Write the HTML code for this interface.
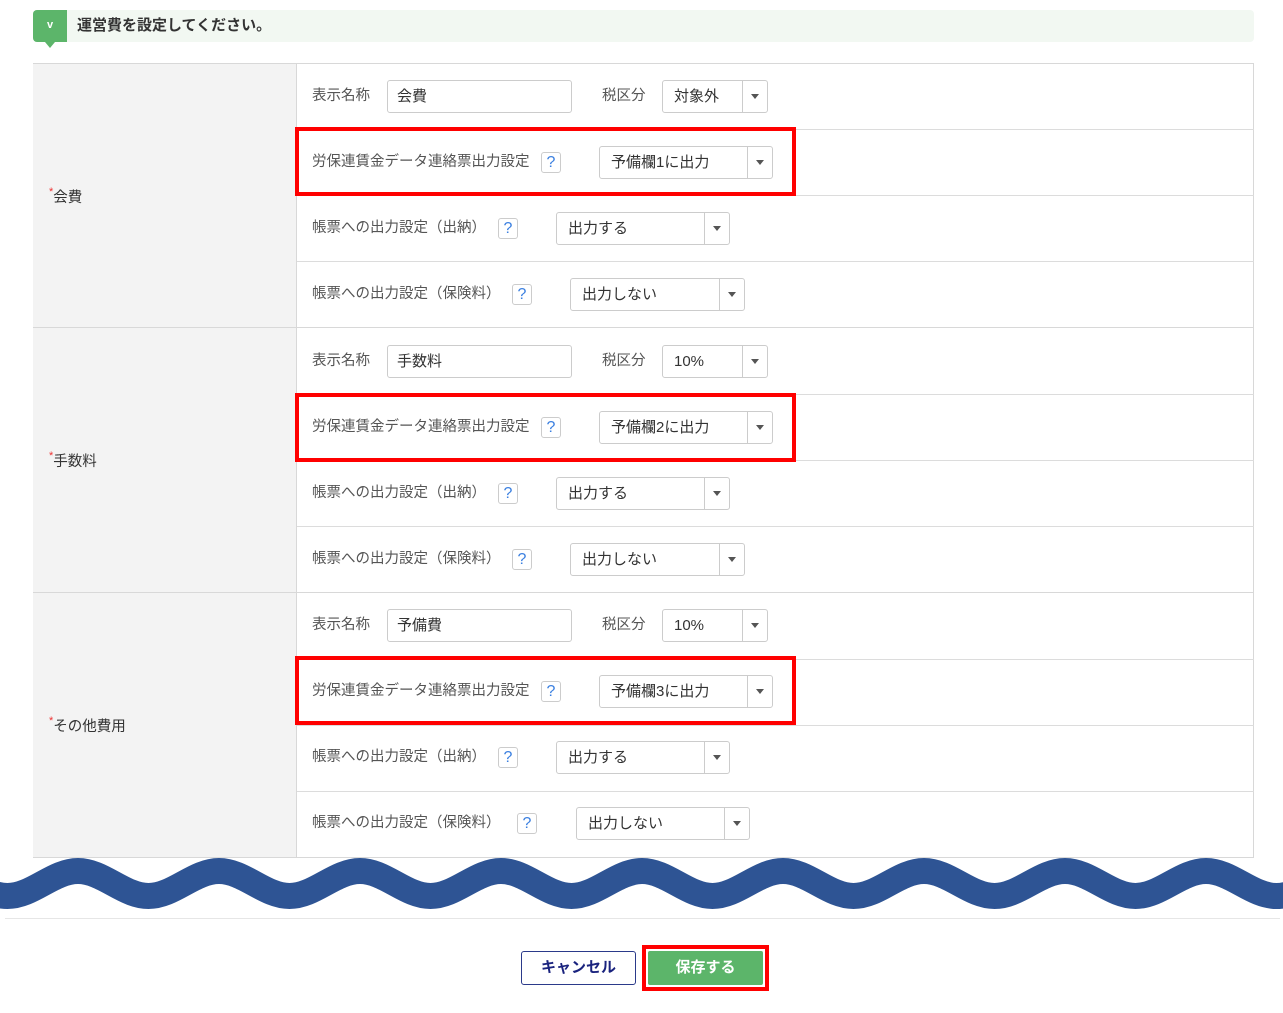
<!DOCTYPE html>
<html><head><meta charset="utf-8"><style>
*{box-sizing:border-box;margin:0;padding:0}
body{width:1283px;height:1013px;background:#fff;position:relative;overflow:hidden;font-family:"Liberation Sans","Noto Sans CJK JP",sans-serif;font-size:14px;color:#555}
.a{position:absolute}
.g{position:absolute;left:33px;width:1221px;height:265px;border-bottom:1px solid #d8d8d8}
.lab{position:absolute;left:0;top:0;width:264px;height:264px;background:#f3f3f3;border-right:1px solid #d8d8d8}
.lab span{position:absolute;left:16px;top:122px;color:#333;font-size:14.5px}
.lab span b{color:#e33;font-weight:normal;font-size:11px;vertical-align:top}
.ln{position:absolute;left:264px;right:0;height:1px;background:#dcdcdc}
.t{position:absolute;line-height:20px;color:#555;font-size:14.5px}
.in{position:absolute;height:33px;border:1px solid #ccc;border-radius:3px;background:#fff;color:#333;font-size:15px;line-height:31px;padding-left:9px}
.sel{position:absolute;height:33px;border:1px solid #ccc;border-radius:3px;background:#fff;color:#333;font-size:15px;line-height:31px;padding-left:11px}
.sel i{position:absolute;right:0;top:0;width:25px;height:31px;border-left:1px solid #ccc}
.sel i:after{content:"";position:absolute;left:8px;top:13px;border-left:4px solid transparent;border-right:4px solid transparent;border-top:5px solid #555}
.q{position:absolute;width:20px;height:21px;border:1px solid #ccc;border-radius:3px;color:#3a7fe0;font-size:16px;line-height:19px;text-align:center;background:#fff}
.red{position:absolute;left:262px;width:501px;height:69px;border:4px solid #f00}
</style></head><body>
<div class="a" style="left:33px;top:10px;width:1221px;height:32px;background:#f2f8f2;border-radius:4px"></div>
<div class="a" style="left:33px;top:10px;width:34px;height:32px;background:#5cb56a;border-radius:4px 0 0 4px;color:#fff;text-align:center;font-size:11px;line-height:30px;font-weight:bold">v</div>
<div class="a" style="left:45px;top:42px;border-left:5px solid transparent;border-right:5px solid transparent;border-top:6px solid #5cb56a"></div>
<div class="a" style="left:77px;top:15px;font-size:15px;font-weight:bold;color:#333;line-height:22px">運営費を設定してください。</div>
<div class="a" style="left:33px;top:63px;width:1221px;height:795px;border:1px solid #d8d8d8"></div>

<div class="g" style="top:63px">
<div class="lab" style="top:1px;height:263px"><span><b>*</b>会費</span></div>
<div class="ln" style="top:66px"></div><div class="ln" style="top:132px"></div><div class="ln" style="top:198px"></div>
<div class="t" style="left:279px;top:23px">表示名称</div>
<div class="in" style="left:354px;top:17px;width:185px">会費</div>
<div class="t" style="left:569px;top:23px">税区分</div>
<div class="sel" style="left:629px;top:17px;width:106px">対象外<i></i></div>
<div class="t" style="left:279px;top:89px">労保連賃金データ連絡票出力設定</div>
<div class="q" style="left:508px;top:89px">?</div>
<div class="sel" style="left:566px;top:83px;width:174px">予備欄1に出力<i></i></div>
<div class="red" style="top:64px"></div>
<div class="t" style="left:279px;top:155px">帳票への出力設定（出納）</div>
<div class="q" style="left:465px;top:155px">?</div>
<div class="sel" style="left:523px;top:149px;width:174px">出力する<i></i></div>
<div class="t" style="left:279px;top:221px">帳票への出力設定（保険料）</div>
<div class="q" style="left:479px;top:221px">?</div>
<div class="sel" style="left:537px;top:215px;width:175px">出力しない<i></i></div>
</div>

<div class="g" style="top:328px">
<div class="lab"><span><b>*</b>手数料</span></div>
<div class="ln" style="top:66px"></div><div class="ln" style="top:132px"></div><div class="ln" style="top:198px"></div>
<div class="t" style="left:279px;top:23px">表示名称</div>
<div class="in" style="left:354px;top:17px;width:185px">手数料</div>
<div class="t" style="left:569px;top:23px">税区分</div>
<div class="sel" style="left:629px;top:17px;width:106px">10%<i></i></div>
<div class="t" style="left:279px;top:89px">労保連賃金データ連絡票出力設定</div>
<div class="q" style="left:508px;top:89px">?</div>
<div class="sel" style="left:566px;top:83px;width:174px">予備欄2に出力<i></i></div>
<div class="red" style="top:65px"></div>
<div class="t" style="left:279px;top:155px">帳票への出力設定（出納）</div>
<div class="q" style="left:465px;top:155px">?</div>
<div class="sel" style="left:523px;top:149px;width:174px">出力する<i></i></div>
<div class="t" style="left:279px;top:221px">帳票への出力設定（保険料）</div>
<div class="q" style="left:479px;top:221px">?</div>
<div class="sel" style="left:537px;top:215px;width:175px">出力しない<i></i></div>
</div>

<div class="g" style="top:593px">
<div class="lab"><span><b>*</b>その他費用</span></div>
<div class="ln" style="top:66px"></div><div class="ln" style="top:132px"></div><div class="ln" style="top:198px"></div>
<div class="t" style="left:279px;top:22px">表示名称</div>
<div class="in" style="left:354px;top:16px;width:185px">予備費</div>
<div class="t" style="left:569px;top:22px">税区分</div>
<div class="sel" style="left:629px;top:16px;width:106px">10%<i></i></div>
<div class="t" style="left:279px;top:88px">労保連賃金データ連絡票出力設定</div>
<div class="q" style="left:508px;top:88px">?</div>
<div class="sel" style="left:566px;top:82px;width:174px">予備欄3に出力<i></i></div>
<div class="red" style="top:63px"></div>
<div class="t" style="left:279px;top:154px">帳票への出力設定（出納）</div>
<div class="q" style="left:465px;top:154px">?</div>
<div class="sel" style="left:523px;top:148px;width:174px">出力する<i></i></div>
<div class="t" style="left:279px;top:220px">帳票への出力設定（保険料）</div>
<div class="q" style="left:484px;top:220px">?</div>
<div class="sel" style="left:543px;top:214px;width:174px">出力しない<i></i></div>
</div>

<svg class="a" style="left:0;top:840px" width="1283" height="90" viewBox="0 840 1283 90">
<path d="M -63 871 C -38 871 -17.5 896 7.5 896 S 53 871 78 871 S 123.5 896 148.5 896 S 194 871 219 871 S 264.5 896 289.5 896 S 335 871 360 871 S 405.5 896 430.5 896 S 476 871 501 871 S 546.5 896 571.5 896 S 617 871 642 871 S 687.5 896 712.5 896 S 758 871 783 871 S 828.5 896 853.5 896 S 899 871 924 871 S 969.5 896 994.5 896 S 1040 871 1065 871 S 1110.5 896 1135.5 896 S 1181 871 1206 871 S 1251.5 896 1276.5 896 S 1322 871 1347 871" fill="none" stroke="#2e5494" stroke-width="26"/>
</svg>
<div class="a" style="left:5px;top:918px;width:1275px;height:1px;background:#e6e6e6"></div>

<div class="a" style="left:521px;top:951px;width:115px;height:34px;border:1px solid #2b3a8a;border-radius:3px;background:#fff;color:#1a237e;font-weight:bold;font-size:15px;text-align:center;line-height:32px">キャンセル</div>
<div class="a" style="left:642px;top:945px;width:127px;height:46px;border:4px solid #f00"></div>
<div class="a" style="left:648px;top:951px;width:115px;height:34px;background:#5cb56a;border-radius:2px;color:#fff;font-weight:bold;font-size:15px;text-align:center;line-height:34px">保存する</div>
</body></html>
